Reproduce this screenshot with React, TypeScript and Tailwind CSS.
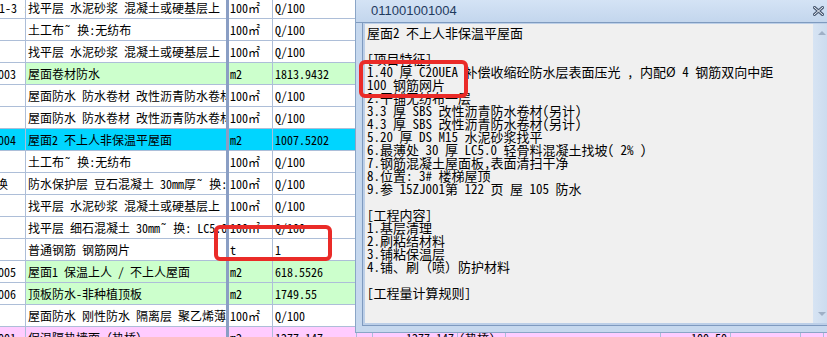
import React from 'react';

type Bg = 'w' | 'g' | 'c' | 'p';
type R = { code?: string; codeCls?: string; name: string; unit: string; qty: string; bg: Bg; x5?: string; x6?: string; x8?: string };

const rows: R[] = [
  { code: '1-3 :', codeCls: 'ml-[-1px]', name: '找平层 水泥砂浆 混凝土或硬基层上', unit: '100㎡', qty: 'Q/100', bg: 'w' },
  { name: '土工布˜ 换:无纺布', unit: '100㎡', qty: 'Q/100', bg: 'w' },
  { name: '找平层 水泥砂浆 混凝土或硬基层上', unit: '100㎡', qty: 'Q/100', bg: 'w' },
  { code: '003', codeCls: 'ml-[-2px]', name: '屋面卷材防水', unit: 'm2', qty: '1813.9432', bg: 'g' },
  { name: '屋面防水 防水卷材 改性沥青防水卷材 热熔法一层', unit: '100㎡', qty: 'Q/100', bg: 'w' },
  { name: '屋面防水 防水卷材 改性沥青防水卷材 热熔法一层', unit: '100㎡', qty: 'Q/100', bg: 'w' },
  { code: '004', codeCls: 'ml-[-2px]', name: '屋面2 不上人非保温平屋面', unit: 'm2', qty: '1007.5202', bg: 'c' },
  { name: '土工布˜ 换:无纺布', unit: '100㎡', qty: 'Q/100', bg: 'w' },
  { code: '换', codeCls: 'ml-[-4px]', name: '防水保护层 豆石混凝土 30mm厚˜ 换:细石混凝土', unit: '100㎡', qty: 'Q/100', bg: 'w' },
  { name: '找平层 水泥砂浆 混凝土或硬基层上', unit: '100㎡', qty: 'Q/100', bg: 'w' },
  { name: '找平层 细石混凝土 30mm˜ 换: LC5.0 轻骨料混凝土', unit: '100㎡', qty: 'Q/100', bg: 'w' },
  { name: '普通钢筋 钢筋网片', unit: 't', qty: '1', bg: 'w' },
  { code: '005', codeCls: 'ml-[-2px]', name: '屋面1 保温上人 / 不上人屋面', unit: 'm2', qty: '618.5526', bg: 'g' },
  { code: '006', codeCls: 'ml-[-2px]', name: '顶板防水-非种植顶板', unit: 'm2', qty: '1749.55', bg: 'g' },
  { name: '屋面防水 刚性防水 隔离层 聚乙烯薄膜', unit: '100㎡', qty: 'Q/100', bg: 'w' },
  { code: '001', codeCls: 'ml-[-2px]', name: '保温隔热墙面（热桥）', unit: 'm2', qty: '1277.147', bg: 'p', x5: '1277.147', x6: '(热桥)', x8: '100.50' },
];

const bgMap: Record<Bg, string> = {
  w: 'bg-white',
  g: 'bg-[#ccffcc]',
  c: 'bg-[#00d5ff]',
  p: 'bg-[#ffccff]',
};
const codeBgMap: Record<Bg, string> = {
  w: 'bg-white',
  g: 'bg-white',
  c: 'bg-[#00d5ff]',
  p: 'bg-[#ffccff]',
};

const cellB = 'border-b border-r border-[#adbed8] flex items-center overflow-hidden whitespace-nowrap shrink-0';

function Row({ r }: { r: R }) {
  const bg = bgMap[r.bg];
  return (
    <div className="flex h-[22px]">
      <div className={`${cellB} w-[26px] ${codeBgMap[r.bg]}`}>
        <span className={r.codeCls}>{r.code ?? ''}</span>
      </div>
      <div className={`border-b border-[#adbed8] flex items-center overflow-hidden whitespace-nowrap shrink-0 w-[200px] pl-[2px] ${bg}`}>
        {r.name}
      </div>
      <div className="w-[3px] shrink-0 bg-[#8a9ec4]" />
      <div className={`${cellB} w-[44px] pl-[1px] ${bg}`}>{r.unit}</div>
      <div className={`${cellB} w-[84px] pl-[2px] ${bg}`}>{r.qty}</div>
      <div className={`${cellB} w-[16px] ${bg}`} />
      <div className={`${cellB} w-[85px] justify-end pr-[3px] ${bg}`}>{r.x5 ?? ''}</div>
      <div className={`${cellB} w-[48px] pl-[1px] ${bg}`}>{r.x6 ?? ''}</div>
      <div className={`${cellB} w-[155px] ${bg}`} />
      <div className={`${cellB} w-[70px] justify-end pr-[3px] ${bg}`}>{r.x8 ?? ''}</div>
      <div className={`${cellB} w-[70px] ${bg}`} />
      <div className={`${cellB} w-[23px] ${bg}`} />
      <div className={`${cellB} w-[40px] ${bg}`} />
    </div>
  );
}

const lines = [
  '屋面2 不上人非保温平屋面',
  '',
  '[项目特征]',
  '1.40 厚 C20UEA 补偿收缩砼防水层表面压光 , 内配Ø 4 钢筋双向中距',
  '100 钢筋网片',
  '2.干铺无纺布一层',
  '3.3 厚 SBS 改性沥青防水卷材(另计)',
  '4.3 厚 SBS 改性沥青防水卷材(另计)',
  '5.20 厚 DS M15 水泥砂浆找平',
  '6.最薄处 30 厚 LC5.0 轻骨料混凝土找坡( 2% )',
  '7.钢筋混凝土屋面板,表面清扫干净',
  '8.位置: 3# 楼梯屋顶',
  '9.参 15ZJ001第 122 页 屋 105 防水',
  '',
  '[工程内容]',
  '1.基层清理',
  '2.刷粘结材料',
  '3.铺粘保温层',
  '4.铺、刷（喷）防护材料',
  '',
  '[工程量计算规则]',
];

export default function App() {
  return (
    <div className="relative w-[827px] h-[337px] overflow-hidden bg-white text-black">
      {/* table */}
      <div className="mt-[-3px] w-[900px] text-[12px] font-['Noto_Sans_Mono_CJK_SC','Liberation_Mono','Noto_Sans_CJK_SC',monospace]">
        {rows.map((r, i) => (
          <Row key={i} r={r} />
        ))}
      </div>

      {/* floating detail window */}
      <div className="absolute left-[355px] top-0 w-[475px] h-[333px] bg-[#c6d8ee] border-l border-b border-[#8aa5c7] flex flex-col">
        <div className="relative h-[22px] shrink-0 flex items-center pl-[15px] bg-gradient-to-b from-[#d4e3f5] to-[#c3d6ed]">
          <span className="text-[13px] text-[#1f3a5e] font-['Liberation_Sans',Arial,sans-serif]">011001001004</span>
          <svg className="absolute left-[457px] top-[6px]" width="11" height="10" viewBox="0 0 11 10">
            <path d="M1.5 1.5 L9.5 8.5 M9.5 1.5 L1.5 8.5" stroke="#4b5b73" strokeWidth="3" strokeLinecap="square" fill="none" />
            <path d="M1.5 1.5 L9.5 8.5 M9.5 1.5 L1.5 8.5" stroke="#eef3fa" strokeWidth="1" strokeLinecap="square" fill="none" />
          </svg>
        </div>
        <div className="h-px shrink-0 bg-[#7f9bbf]" />
        <div className="flex-1 flex pl-[6px] pb-[6px] min-h-0">
          <div className="flex-1 flex border-l border-b border-[#7f9abf] min-h-0">
            <div className="flex-1 flex border-l-2 border-b-2 border-t border-[#bccfe8] min-h-0">
              <div className="w-[448px] shrink-0 bg-[#f0f0f0] pt-[2px] pl-[2px] overflow-hidden text-[13px] leading-[13px] whitespace-pre font-['Noto_Sans_Mono_CJK_SC','Liberation_Mono','Noto_Sans_CJK_SC',monospace]">
                {lines.map((l, i) => (
                  <div key={i} className="h-[13px]">
                    {l}
                  </div>
                ))}
              </div>
              <div className="w-[17px] shrink-0 bg-gradient-to-r from-[#d7e4f3] to-[#c9daee] flex flex-col items-center justify-between pt-[7px] pb-[7px]">
                <div className="w-0 h-0 border-l-[4px] border-r-[4px] border-b-[4px] border-l-transparent border-r-transparent border-b-[#9fb0c6]" />
                <div className="w-0 h-0 border-l-[4px] border-r-[4px] border-t-[4px] border-l-transparent border-r-transparent border-t-[#9fb0c6]" />
              </div>
            </div>
          </div>
        </div>
      </div>

      {/* red annotation boxes */}
      <div className="absolute left-[359px] top-[60px] w-[109px] h-[38px] border-[4px] border-[#ea2b28] rounded-[6px]" />
      <div className="absolute left-[214px] top-[225px] w-[118px] h-[36px] border-[4px] border-[#ea2b28] rounded-[6px]" />
    </div>
  );
}
